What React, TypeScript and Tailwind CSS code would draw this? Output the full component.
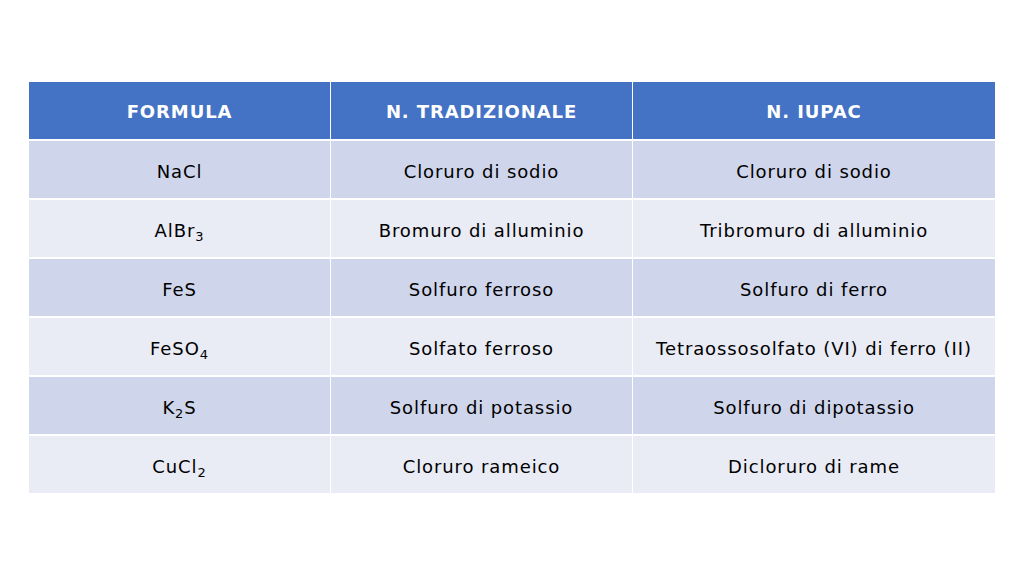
const rows: { formula: React.ReactNode; trad: string; iupac: string }[] = [
  { formula: "NaCl", trad: "Cloruro di sodio", iupac: "Cloruro di sodio" },
  { formula: <>AlBr<sub className="text-[13px] relative top-[4px] align-baseline">3</sub></>, trad: "Bromuro di alluminio", iupac: "Tribromuro di alluminio" },
  { formula: "FeS", trad: "Solfuro ferroso", iupac: "Solfuro di ferro" },
  { formula: <>FeSO<sub className="text-[13px] relative top-[4px] align-baseline">4</sub></>, trad: "Solfato ferroso", iupac: "Tetraossosolfato (VI) di ferro (II)" },
  { formula: <>K<sub className="text-[13px] relative top-[4px] align-baseline">2</sub>S</>, trad: "Solfuro di potassio", iupac: "Solfuro di dipotassio" },
  { formula: <>CuCl<sub className="text-[13px] relative top-[4px] align-baseline">2</sub></>, trad: "Cloruro rameico", iupac: "Dicloruro di rame" },
];

export default function App() {
  return (
    <div className="w-[1024px] h-[576px] bg-white pt-[82px] pl-[29px] font-['DejaVu_Sans',Verdana,sans-serif]">
      <div className="grid grid-cols-[301px_301px_362px] gap-x-[1px] gap-y-[2px] text-[18px] tracking-[0.9px] text-black">
        {["FORMULA", "N. TRADIZIONALE", "N. IUPAC"].map((h) => (
          <div key={h} className="h-[57px] bg-[#4472c4] flex items-center justify-center font-bold text-white pt-[2px]">
            {h}
          </div>
        ))}
        {rows.map((r, i) => {
          const bg = i % 2 === 0 ? "bg-[#cfd5ea]" : "bg-[#e9ebf5]";
          return [r.formula, r.trad, r.iupac].map((c, j) => (
            <div key={`${i}-${j}`} className={`h-[57px] ${bg} flex items-center justify-center pt-[3px]`}>
              <span>{c}</span>
            </div>
          ));
        })}
      </div>
    </div>
  );
}
